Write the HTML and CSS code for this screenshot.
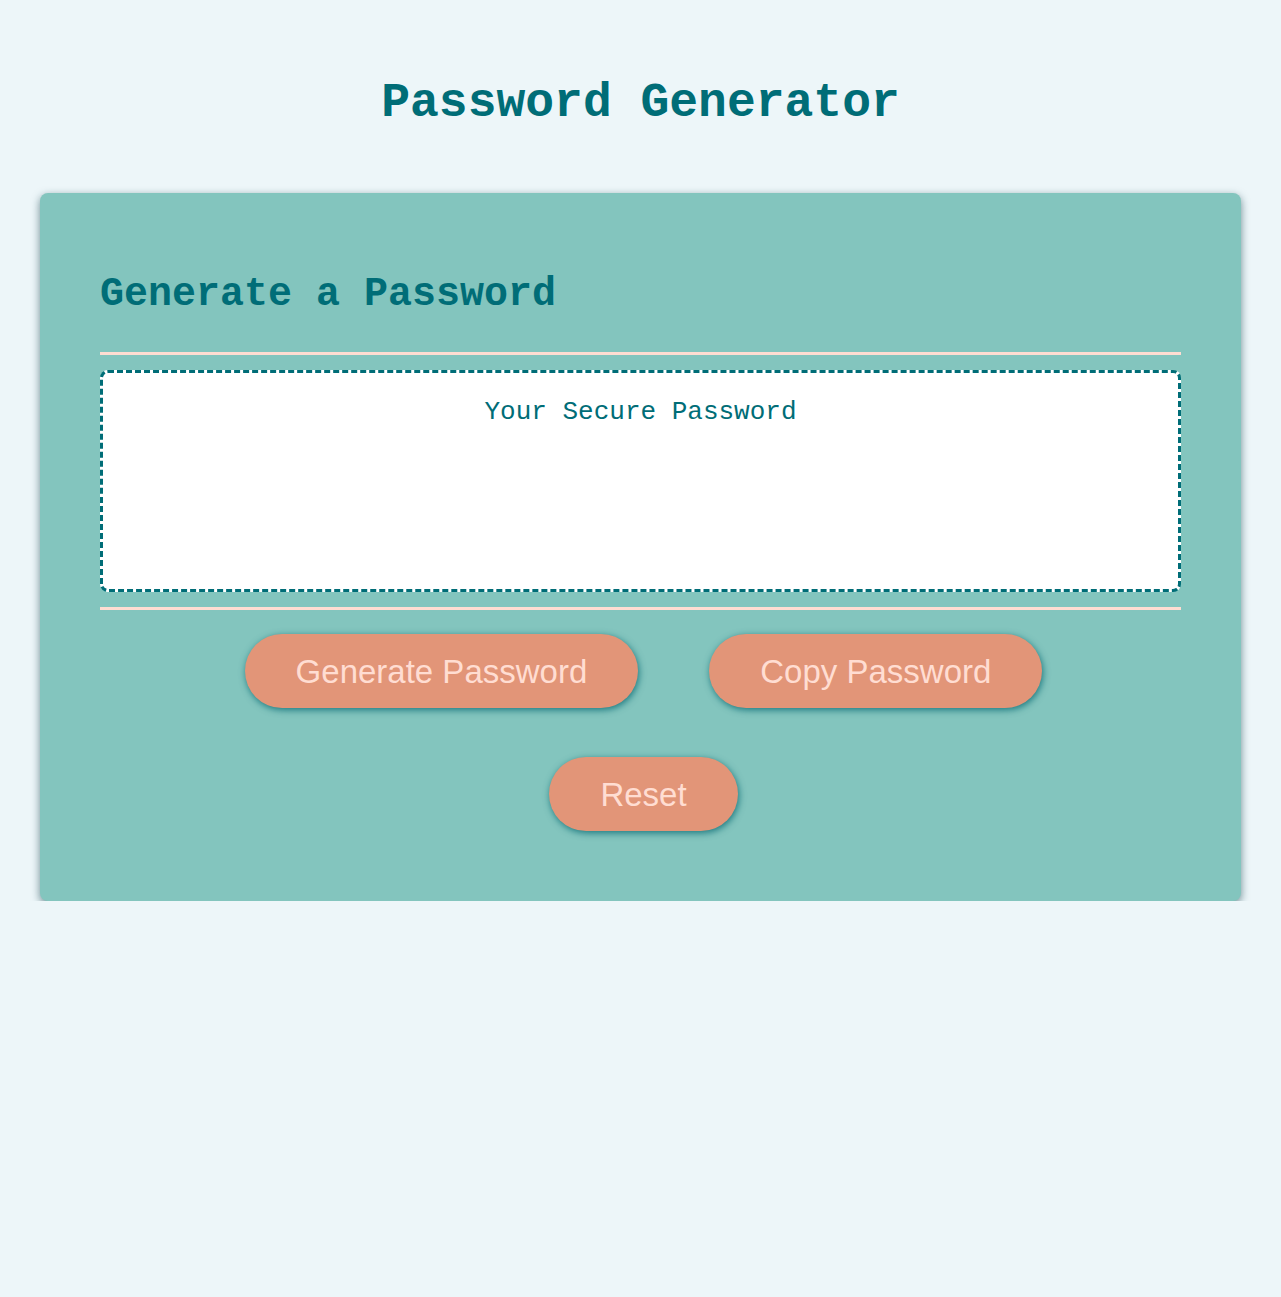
FILE: index.html
```html
<!DOCTYPE html>
<html lang="en">
<head>
<meta charset="UTF-8">
<title>Password Generator</title>
<link rel="stylesheet" href="styles.css">
</head>
<body>
  <div class="wrapper">
    <header>
      <h1 class="title">Password Generator</h1>
    </header>
    <div class="card">
      <div class="card-header">
        <h2 class="card-title">Generate a Password</h2>
      </div>
      <div class="card-body">
        <textarea readonly class="password" placeholder="Your Secure Password" aria-label="Generated Password"></textarea>
      </div>
      <div class="card-footer">
        <div class="btn-row">
          <button class="btn">Generate Password</button>
          <button class="btn">Copy Password</button>
        </div>
        <div class="btn-row">
          <button class="btn">Reset</button>
        </div>
      </div>
    </div>
  </div>
</body>
</html>
```
FILE: styles.css
```css
*, *::before, *::after {
  box-sizing: border-box;
}

html, body {
  margin: 0;
  padding: 0;
}

body {
  background-color: #edf6f9;
  font-family: "Liberation Sans", Arial, sans-serif;
  color: #006d77;
}

.wrapper {
  padding: 0 40px 0 40px;
}

.title {
  margin: 75px 0 62px;
  font-family: "Courier New", "Liberation Mono", monospace;
  font-weight: bold;
  font-size: 48px;
  line-height: 56px;
  text-align: center;
  color: #006d77;
}

.card {
  background-color: #83c5be;
  border-radius: 8px;
  box-shadow: 0 3px 8px rgba(20, 65, 75, 0.6);
  padding: 79px 60px 70px;
}

.card-header::after {
  content: "";
  display: block;
  height: 3px;
  background: #ffddd2;
  margin-top: 34px;
}

.card-title {
  margin: 0;
  font-family: "Courier New", "Liberation Mono", monospace;
  font-weight: bold;
  font-size: 40px;
  line-height: 46px;
  color: #006d77;
}

.card-body {
  padding: 15px 0;
}

.password {
  display: block;
  width: 100%;
  height: 222px;
  margin: 0;
  padding: 24px 20px 0;
  border: 3px dashed #006d77;
  border-radius: 8px;
  background: #ffffff;
  font-family: "Liberation Mono", monospace;
  font-size: 26px;
  line-height: 30px;
  text-align: center;
  color: #006d77;
  resize: none;
  overflow: hidden;
  outline: none;
}

.password::placeholder {
  color: #006d77;
  opacity: 1;
}

.card-footer::before {
  content: "";
  display: block;
  height: 3px;
  background: #ffddd2;
  margin-bottom: 24px;
}

.btn-row {
  display: flex;
  justify-content: center;
  gap: 71px;
  padding-left: 6px;
}

.btn-row + .btn-row {
  margin-top: 49px;
}

.btn {
  display: flex;
  align-items: center;
  justify-content: center;
  height: 74px;
  padding: 0 51px;
  border: none;
  border-radius: 37px;
  background-color: #e29578;
  color: #ffddd2;
  font-family: "Liberation Sans", Arial, sans-serif;
  font-size: 33px;
  line-height: 1;
  box-shadow: 1px 2px 7px rgba(0, 100, 110, 0.8);
  cursor: pointer;
}
```
